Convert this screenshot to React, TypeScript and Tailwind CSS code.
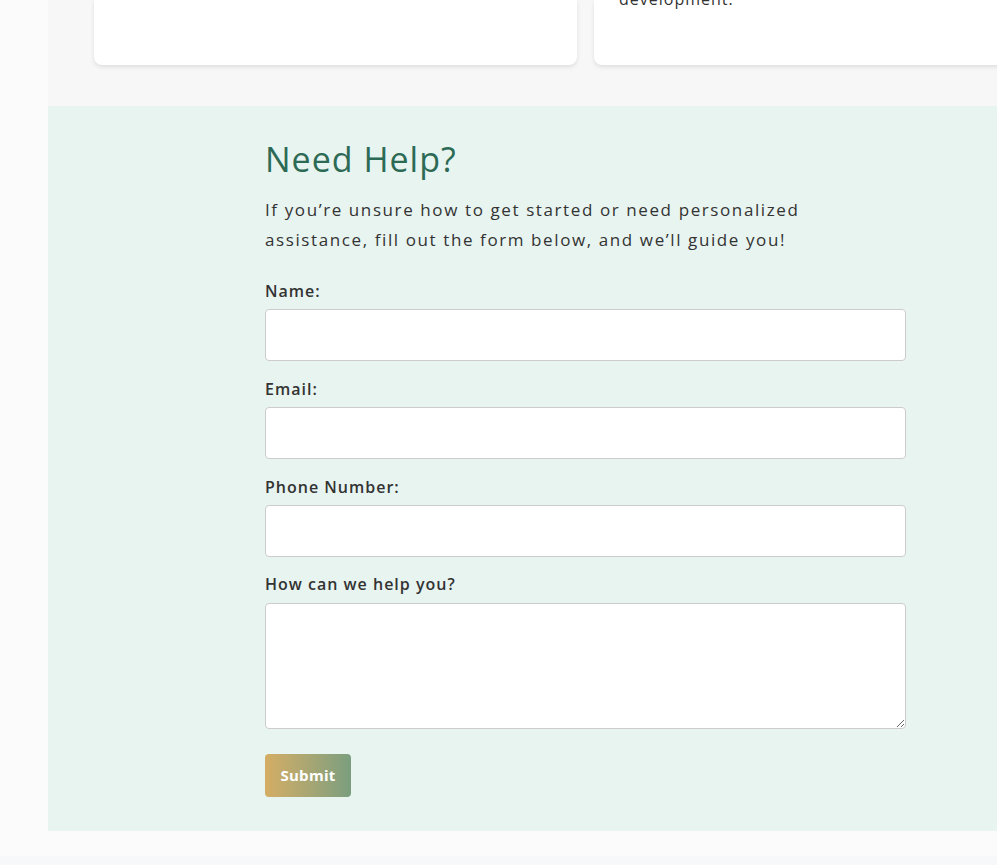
import React from 'react';

const fields = [
    { id: 'name', label: 'Name:', type: 'text' },
    { id: 'email', label: 'Email:', type: 'email' },
    { id: 'phone', label: 'Phone Number:', type: 'tel' },
];

export default function App() {
    return (
        <div className="w-[997px] h-[865px] overflow-hidden bg-[#fbfbfb] font-['Open_Sans',sans-serif]">
            <main className="ml-[48px] w-[1100px] bg-[#f7f7f7]">
                {/* Cards (scrolled past) */}
                <div className="flex gap-[17px] pl-[46px] pb-[41px]">
                    <div className="w-[483px] h-[65px] bg-white rounded-b-[8px] shadow-[0_2px_4px_rgba(0,0,0,0.1)]" />
                    <div className="w-[483px] h-[65px] bg-white rounded-b-[8px] shadow-[0_2px_4px_rgba(0,0,0,0.1)] relative overflow-hidden">
                        <p className="absolute left-[25px] -top-[13px] text-[16px] leading-[24px] tracking-[1px] text-[#333]">development.</p>
                    </div>
                </div>

                {/* Help form */}
                <section className="bg-[#e8f4f0] pl-[217px] pt-[33px] pb-[34px]">
                    <div className="w-[641px]">
                        <h2 className="text-[34px] leading-[40px] text-[#2d6a55] tracking-[1px]">Need Help?</h2>
                        <p className="mt-[16px] max-w-[560px] text-[17px] leading-[30px] tracking-[1.6px] text-[#333]">
                            If you’re unsure how to get started or need personalized assistance, fill out the form below, and we’ll guide you!
                        </p>

                        <form className="mt-[24px]" onSubmit={ (e) => e.preventDefault() }>
                            { fields.map((f) => (
                                <div key={ f.id } className="mb-[16px]">
                                    <label htmlFor={ f.id } className="block mb-[6px] text-[16px] leading-[24px] font-semibold tracking-[1px] text-[#333]">{ f.label }</label>
                                    <input id={ f.id } type={ f.type } className="block w-full h-[52px] bg-white border border-[#ccc] rounded-[4px]" />
                                </div>
                            )) }
                            <div className="-mt-[1px] mb-[25px]">
                                <label htmlFor="msg" className="block mb-[7px] text-[16px] leading-[24px] font-semibold tracking-[1px] text-[#333]">How can we help you?</label>
                                <textarea id="msg" className="block w-full h-[126px] bg-white border border-[#ccc] rounded-[4px]" />
                            </div>
                            <button type="submit" className="w-[86px] h-[43px] rounded-[4px] bg-gradient-to-r from-[#d4ad64] to-[#7a9e7e] text-white font-bold text-[15px] tracking-[0.3px]">
                                Submit
                            </button>
                        </form>
                    </div>
                </section>
            </main>
            <div className="h-[25px] bg-[#fbfbfb]" />
            <div className="h-[20px] bg-[#f6f8fa]" />
        </div>
    );
}
